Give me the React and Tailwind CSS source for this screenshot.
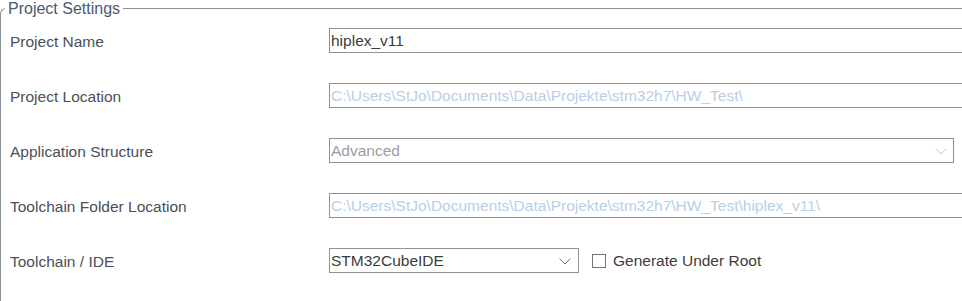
import React from 'react'

function Chevron({ color }) {
  return (
    <svg width="12" height="7" viewBox="0 0 12 7" className="shrink-0">
      <path d="M0.5 0.5 L6 6 L11.5 0.5" fill="none" stroke={color} strokeWidth="1" />
    </svg>
  )
}

export default function App() {
  const rows = [
    { label: 'Project Name', value: 'hiplex_v11', kind: 'text' },
    {
      label: 'Project Location',
      value: 'C:\\Users\\StJo\\Documents\\Data\\Projekte\\stm32h7\\HW_Test\\',
      kind: 'disabled',
    },
    { label: 'Application Structure', value: 'Advanced', kind: 'select-disabled' },
    {
      label: 'Toolchain Folder Location',
      value: 'C:\\Users\\StJo\\Documents\\Data\\Projekte\\stm32h7\\HW_Test\\hiplex_v11\\',
      kind: 'disabled',
    },
    { label: 'Toolchain / IDE', value: 'STM32CubeIDE', kind: 'select' },
  ]

  return (
    <div
      className="w-[962px] h-[301px] overflow-hidden bg-white text-[15.5px] text-[#4a4f58]"
      style={{ fontFamily: '"Liberation Sans", Arial, sans-serif' }}
    >
      <fieldset className="w-[1000px] h-[320px] border-l border-t border-[#8c9399] rounded-tl-[6px]">
        <legend className="ml-[4px] px-[3px] leading-[17px] text-[16px] text-[#4a5a70]">Project Settings</legend>

        {/* Rows */}
        <div className="flex flex-col gap-[30px] mt-[11px] pl-[9px]">
          {rows.map((row) => (
            <div key={row.label} className="flex items-center h-[25px]">
              <div className="w-[319px] shrink-0 leading-[17px] pt-[1px]">{row.label}</div>

              {row.kind === 'text' && (
                <div className="w-[640px] h-[25px] border border-[#8c9399] pl-[1px] pt-[1px] flex items-center text-[#3c3c3c]">
                  {row.value}
                </div>
              )}

              {row.kind === 'disabled' && (
                <div className="w-[640px] h-[25px] border border-[#8c9399] pl-[1px] pt-[1px] flex items-center text-[#b8cfe8] whitespace-nowrap">
                  {row.value}
                </div>
              )}

              {row.kind === 'select-disabled' && (
                <div className="w-[625px] h-[25px] border border-[#8c9399] pl-[1px] pt-[1px] pr-[6px] flex items-center justify-between text-[#9a9ea3]">
                  <span>{row.value}</span>
                  <Chevron color="#c4c6c8" />
                </div>
              )}

              {row.kind === 'select' && (
                <>
                  <div className="w-[250px] h-[25px] border border-[#8c9399] pl-[1px] pt-[1px] pr-[7px] flex items-center justify-between text-[#3c3c3c]">
                    <span>{row.value}</span>
                    <Chevron color="#6f7378" />
                  </div>
                  <div className="ml-[13px] w-[14px] h-[14px] border border-[#6f7378] bg-white" />
                  <span className="ml-[7px] pt-[1px] text-[#3c3c3c]">Generate Under Root</span>
                </>
              )}
            </div>
          ))}
        </div>
      </fieldset>
    </div>
  )
}
